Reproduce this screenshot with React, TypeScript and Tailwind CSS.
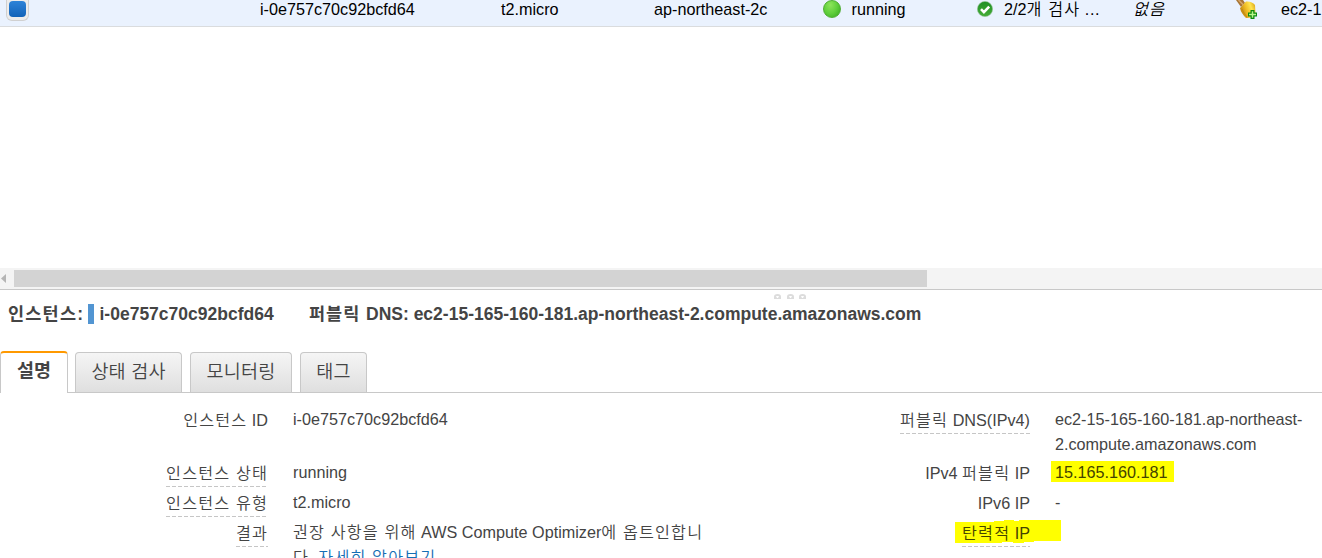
import type { ReactNode } from "react";

function Broom() {
  return (
    <svg width="22" height="20" viewBox="0 0 22 20" className="block">
      <defs>
        <linearGradient id="broom" x1="0" y1="0.6" x2="1" y2="0.2">
          <stop offset="0" stopColor="#b87c0c" />
          <stop offset="0.4" stopColor="#f0bd25" />
          <stop offset="0.7" stopColor="#ffe450" />
          <stop offset="1" stopColor="#dba516" />
        </linearGradient>
      </defs>
      <path d="M1 0h7l2 3-4 4z" fill="#a87534" />
      <path d="M3.500 0l5 5" stroke="#d6a668" strokeWidth="1.500" />
      <path d="M5 8L8 5 11 1.500Q17 1 20 5L20.500 14Q17 18.500 11 18Q6 13 5 8z" fill="url(#broom)" />
      <path d="M7 9q2 5 5 8" stroke="#c18a12" strokeWidth="1" fill="none" />
      <path d="M15.500 10h4v2.500h2.500v4h-2.500v2.500h-4v-2.500h-2.500v-4h2.500z" fill="#0a8b10" />
      <path d="M17.500 11.200v6.600M14 14.500h7" stroke="#b9f58b" strokeWidth="1.500" />
    </svg>
  );
}

function Check() {
  return (
    <svg width="16" height="18" viewBox="0 0 16 18" className="block">
      <defs>
        <linearGradient id="ok" x1="0" y1="0" x2="0" y2="1">
          <stop offset="0" stopColor="#1f8f24" />
          <stop offset="1" stopColor="#46ad38" />
        </linearGradient>
      </defs>
      <circle cx="8" cy="9" r="7.600" fill="url(#ok)" stroke="#8fbf92" strokeWidth="0.600" />
      <path d="M4 9.200l2.900 2.900 5.300-5.500" fill="none" stroke="#fff" strokeWidth="2.600" />
    </svg>
  );
}

function Ko({ children }: { children: ReactNode }) {
  return <span className="font-[350] tracking-[1.150px]">{children}</span>;
}

function InstanceRow() {
  return (
    <div className="flex h-[27px] shrink-0 border-b border-[#dadcde] bg-[#eaf2fe] text-[16.200px] leading-[19px] text-black">
      <div className="w-[260px] pl-1.5">
        <div className="h-[21px] w-[23px] rounded-b-[6px] border border-t-0 border-[#d0d0d0] bg-[#ececec] px-[2px] pt-px">
          <div className="h-4 w-[17px] rounded-[4px] bg-linear-to-b from-[#2d83d8] to-[#1263b8]" />
        </div>
      </div>
      <div className="w-[241px]">i-0e757c70c92bcfd64</div>
      <div className="w-[153px]">t2.micro</div>
      <div className="w-[169px]">ap-northeast-2c</div>
      <div className="w-[28.500px]">
        <div className="h-[18px] w-[18px] rounded-full border border-[#4fae32] bg-radial-[at_40%_25%] from-[#8ce45a] via-[#60cf3c] to-[#34a61c]" />
      </div>
      <div className="w-[125.500px]">running</div>
      <div className="w-[27px]"><Check /></div>
      <div className="w-[129px] whitespace-nowrap">2/2<Ko>개 검사</Ko> <span className="tracking-[0.600px]">...</span></div>
      <div className="w-[102px] italic"><Ko>없음</Ko></div>
      <div className="w-[46px]"><Broom /></div>
      <div className="w-[41px] whitespace-nowrap">ec2-1</div>
    </div>
  );
}

function Scrollbar() {
  return (
    <div className="flex h-[21px] shrink-0 items-center bg-[#f4f4f4]">
      <div className="w-3.5 pl-px">
        <svg width="5" height="9" viewBox="0 0 5 9"><path d="M5 0v9L0 4.500z" fill="#b5b5b5" /></svg>
      </div>
      <div className="h-[17px] w-[913px] bg-[#d3d3d3]" />
    </div>
  );
}

function Grip() {
  return (
    <div className="flex h-[11px] gap-[5.500px] pt-1 pl-[774px]">
      {[0, 1, 2].map((n) => (
        <svg key={n} width="7" height="5" viewBox="0 0 7 5">
          <path d="M0 5V2.500Q0 0 3.500 0T7 2.500V5z" fill="#dcdcdc" />
          <path d="M2 2h3l-1 2H3z" fill="#fff" />
        </svg>
      ))}
    </div>
  );
}

function Tab({ className, children }: { className: string; children: ReactNode }) {
  return (
    <div className={`flex h-10 justify-center rounded-t-[4px] border border-b-0 border-[#c8c8c8] bg-linear-to-b from-[#f5f5f5] to-[#dfdfdf] text-[18.500px] leading-[37px] font-[350] tracking-[0.200px] ${className}`}>
      {children}
    </div>
  );
}

function Label({ children, dashed = false, className = "" }: { children: ReactNode; dashed?: boolean; className?: string }) {
  return (
    <div className="flex justify-end">
      <span className={`h-[27px] whitespace-nowrap pt-px ${className}`}>
        {children}
        {dashed && (
          <span className="block h-px w-full bg-[repeating-linear-gradient(90deg,#c6c6c6_0_4px,transparent_4px_6px)]" />
        )}
      </span>
    </div>
  );
}

export default function App() {
  return (
    <div className="flex h-[558px] w-[1322px] flex-col overflow-hidden bg-white font-['Liberation_Sans','Noto_Sans_CJK_KR',sans-serif] text-[#444]">
      <InstanceRow />
      <div className="h-[241px] shrink-0" />
      <Scrollbar />
      <div className="flex h-[61px] shrink-0 flex-col border-t border-[#c8c8c8]">
        <Grip />
        <div className="flex h-[26px] items-center whitespace-nowrap pl-2 text-[17.500px] leading-[26px] font-bold">
          <span className="w-20 tracking-[1.200px]">인스턴스:</span>
          <span className="h-5 w-1.5 bg-[#5295d2]" />
          <span className="w-[215px] pl-[5.500px]">i-0e757c70c92bcfd64</span>
          <span className="w-[57px] tracking-[1px]">퍼블릭</span>
          <span>DNS: ec2-15-165-160-181.ap-northeast-2.compute.amazonaws.com</span>
        </div>
      </div>
      <div className="flex h-[43px] shrink-0 items-end">
        <div className="flex h-[42px] w-[68px] justify-center rounded-t-[4px] border-x border-t-2 border-x-[#c8c8c8] border-t-[#f90] text-[18.500px] leading-9 font-bold">설명</div>
        <div className="h-[42px] w-[7px] border-b border-[#c8c8c8]" />
        <div className="flex h-[42px] grow items-end gap-2 border-b border-[#c8c8c8]">
          <Tab className="w-[107px]">상태 검사</Tab>
          <Tab className="w-[102px]">모니터링</Tab>
          <Tab className="w-[67px]">태그</Tab>
        </div>
      </div>
      <div className="flex shrink-0 pt-3.5 text-[16.200px] leading-[25px]">
        <div className="grid w-[762px] grid-cols-[268px_430px] grid-rows-[53px_30px_30px_50px] gap-x-[25px]">
          <Label><Ko>인스턴스</Ko> ID</Label>
          <div>i-0e757c70c92bcfd64</div>
          <Label dashed><Ko>인스턴스 상태</Ko></Label>
          <div>running</div>
          <Label dashed><Ko>인스턴스 유형</Ko></Label>
          <div>t2.micro</div>
          <Label dashed><Ko>결과</Ko></Label>
          <div>
            <Ko>권장 사항을 위해</Ko> AWS Compute Optimizer<Ko>에 옵트인합니</Ko><br />
            <Ko>다. <span className="-ml-0.5 text-[#146eb4]">자세히 알아보기</span></Ko>
          </div>
        </div>
        <div className="grid w-[560px] grid-cols-[268px_267px] grid-rows-[53px_30px_30px_50px] gap-x-[25px]">
          <Label dashed><Ko>퍼블릭</Ko> DNS(IPv4)</Label>
          <div className="whitespace-nowrap">ec2-15-165-160-181.ap-northeast-<br />2.compute.amazonaws.com</div>
          <Label>IPv4 <Ko>퍼블릭</Ko> IP</Label>
          <div>
            <div className="-ml-1 mt-[1px] h-[21px] w-[123px] bg-[#ff0] pl-1 leading-[23px] text-[#444400]">15.165.160.181</div>
          </div>
          <Label>IPv6 IP</Label>
          <div>-</div>
          <div className="relative z-0">
            <svg width="106" height="24" viewBox="0 0 106 24" className="absolute top-0 left-[193px] -z-10">
              <path d="M0 2H39V1H49V0H59V1H64V0H106V21H79V22H69V23H58V22H47V23H0z" fill="#ff0" />
            </svg>
            <Label dashed className="text-[#444400]"><Ko>탄력적</Ko> IP</Label>
          </div>
          <div />
        </div>
      </div>
    </div>
  );
}
